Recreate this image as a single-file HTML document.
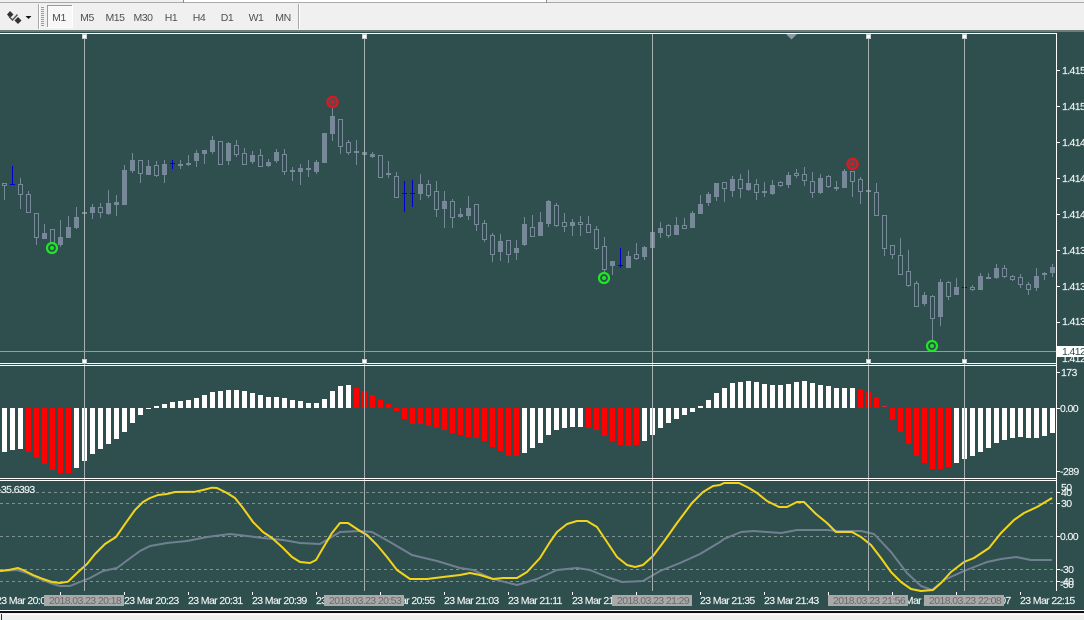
<!DOCTYPE html>
<html><head><meta charset="utf-8"><title>Chart</title>
<style>
html,body{margin:0;padding:0;width:1084px;height:620px;overflow:hidden;background:#2f4f4f}
svg{display:block;position:absolute;left:0;top:0}
text{font-family:"Liberation Sans",sans-serif;font-size:10.5px;letter-spacing:-.6px}
.ax text{fill:#eef2f2;stroke:#eef2f2;stroke-width:.15px}
.tb text{fill:#4f4f4f;font-size:10.5px;letter-spacing:-.45px;text-anchor:middle}
.lb text{fill:#6a6a6a}
</style></head><body>
<svg width="1084" height="620" viewBox="0 0 1084 620" xmlns="http://www.w3.org/2000/svg">
<rect width="1084" height="620" fill="#2f4f4f"/>

<!-- dashed levels -->
<path d="M0 492.5H1056M0 503.5H1056M0 536.5H1056M0 569.5H1056M0 581.5H1056" stroke="#7f9292" stroke-dasharray="3 3" fill="none"/>

<!-- wicks -->
<path fill="none" stroke="#778899" stroke-width="1" d="M4.5 183V200M20.5 178V209M28.5 191V213M36.5 213V245M44.5 224V239M52.5 229V250M60.5 220V247M68.5 216V238M76.5 207V229M92.5 204V219M100.5 203V218M108.5 190V215M116.5 195V216M124.5 165V205M132.5 153V173M140.5 160V183M148.5 160V175M156.5 161V177M164.5 160V183M180.5 160V169M188.5 155V166M196.5 150V167M204.5 150V164M212.5 136V154M220.5 141V165M228.5 142V165M236.5 140V157M244.5 148V165M252.5 151V164M260.5 149V167M268.5 159V167M276.5 149V163M284.5 149V175M292.5 167V181M300.5 164V185M308.5 160V177M316.5 160V174M324.5 133V163M332.5 108V141M340.5 119V154M348.5 140V155M356.5 140V165M364.5 152V156M372.5 152V158M380.5 155V178M388.5 161V178M396.5 172V198M420.5 174V200M428.5 180V198M436.5 181V217M444.5 191V228M452.5 199V228M460.5 208V218M468.5 196V220M476.5 204V231M484.5 220V242M492.5 233V262M500.5 234V261M508.5 240V263M516.5 240V260M524.5 217V246M532.5 215V236M540.5 212V236M548.5 200V227M556.5 203V227M564.5 213V232M572.5 219V236M580.5 216V236M588.5 216V233M596.5 226V250M604.5 237V272M612.5 261V275M628.5 251V268M636.5 243V260M644.5 246V260M652.5 232V248M660.5 222V238M668.5 224V238M676.5 217V235M684.5 218V228M692.5 211V228M700.5 195V214M708.5 192V206M716.5 183V201M724.5 182V202M732.5 176V197M740.5 174V198M748.5 170V191M756.5 179V200M764.5 182V197M772.5 180V195M780.5 181V187M788.5 172V188M796.5 169V178M804.5 167V186M812.5 172V198M820.5 174V194M828.5 175V188M836.5 181V191M844.5 169V188M852.5 171V197M860.5 177V204M876.5 183V216M884.5 215V256M892.5 245V259M900.5 238V274M908.5 250V287M916.5 281V307M924.5 292V306M932.5 295V340M940.5 279V326M948.5 281V300M956.5 278V295M972.5 285V291M980.5 273V290M988.5 273V279M996.5 264V279M1004.5 265V278M1012.5 275V281M1020.5 274V288M1028.5 282V295M1036.5 268V291M1044.5 272V280M1052.5 264V277"/>
<!-- filled bodies -->
<path fill="none" stroke="#778899" stroke-width="5" d="M44.5 233V239M60.5 237V245M68.5 227V238M76.5 217V228M84.5 212V214M92.5 207V213M108.5 203V214M116.5 202V205M124.5 170V205M132.5 160V171M148.5 166V175M164.5 164V175M180.5 164V166M188.5 163V165M196.5 153V161M204.5 150V154M212.5 140V152M228.5 143V161M252.5 155V162M268.5 162V166M276.5 152V161M292.5 170V172M300.5 168V172M308.5 168V170M316.5 162V172M324.5 133V163M332.5 116V134M356.5 151V153M364.5 152V155M372.5 154V157M388.5 173V175M420.5 184V194M444.5 201V209M460.5 214V217M468.5 208V216M500.5 241V252M516.5 248V253M524.5 224V245M540.5 222V236M548.5 201V224M572.5 222V226M612.5 261V266M628.5 256V268M644.5 247V257M652.5 232V248M660.5 228V233M676.5 225V235M692.5 213V228M700.5 204V214M708.5 194V203M716.5 183V197M732.5 179V191M748.5 183V190M764.5 191V193M772.5 185V194M788.5 175V185M820.5 178V193M836.5 187V189M844.5 171V188M868.5 190V192M924.5 295V304M940.5 282V317M956.5 287V295M980.5 276V290M988.5 277V279M996.5 268V278M1036.5 276V288M1044.5 273V275M1052.5 267V273"/>
<!-- hollow bodies -->
<path fill="#2f4f4f" stroke="#778899" stroke-width="1" d="M2.5 183.5h4v2h-4zM18.5 184.5h4v10h-4zM26.5 194.5h4v18h-4zM34.5 213.5h4v24h-4zM50.5 229.5h4v14h-4zM98.5 207.5h4v5h-4zM138.5 160.5h4v13h-4zM154.5 165.5h4v10h-4zM218.5 141.5h4v23h-4zM234.5 145.5h4v9h-4zM242.5 153.5h4v11h-4zM258.5 155.5h4v11h-4zM282.5 154.5h4v17h-4zM338.5 119.5h4v27h-4zM346.5 142.5h4v10h-4zM378.5 155.5h4v22h-4zM394.5 176.5h4v21h-4zM426.5 184.5h4v11h-4zM434.5 191.5h4v18h-4zM450.5 201.5h4v16h-4zM474.5 204.5h4v20h-4zM482.5 223.5h4v16h-4zM490.5 235.5h4v19h-4zM506.5 240.5h4v14h-4zM530.5 227.5h4v9h-4zM554.5 205.5h4v20h-4zM562.5 222.5h4v4h-4zM578.5 222.5h4v2h-4zM586.5 224.5h4v8h-4zM594.5 229.5h4v19h-4zM602.5 246.5h4v23h-4zM634.5 254.5h4v4h-4zM666.5 225.5h4v10h-4zM682.5 225.5h4v3h-4zM722.5 182.5h4v6h-4zM738.5 179.5h4v9h-4zM754.5 184.5h4v8h-4zM778.5 182.5h4v3h-4zM794.5 173.5h4v2h-4zM802.5 174.5h4v6h-4zM810.5 181.5h4v11h-4zM826.5 176.5h4v10h-4zM850.5 171.5h4v10h-4zM858.5 179.5h4v12h-4zM874.5 192.5h4v23h-4zM882.5 215.5h4v33h-4zM890.5 245.5h4v9h-4zM898.5 255.5h4v19h-4zM906.5 271.5h4v14h-4zM914.5 283.5h4v23h-4zM930.5 296.5h4v22h-4zM946.5 282.5h4v14h-4zM970.5 287.5h4v2h-4zM1002.5 268.5h4v8h-4zM1010.5 276.5h4v3h-4zM1018.5 277.5h4v7h-4zM1026.5 284.5h4v5h-4z"/>
<!-- blue candles -->
<path fill="none" stroke="#0000cd" stroke-width="1" d="M12.5 166V185M10 184.5H15M172.5 160V169M170 163.5H175M404.5 181V212M402 193.5H407M412.5 180V207M410 193.5H415M620.5 248V268M618 265.5H623M962 287.5H967"/>

<!-- markers -->
<circle cx="52" cy="248" r="5" fill="#2f4f4f" stroke="#1de622" stroke-width="2.2"/><circle cx="52" cy="248" r="2" fill="#1de622"/>
<circle cx="604" cy="278" r="5" fill="#2f4f4f" stroke="#1de622" stroke-width="2.2"/><circle cx="604" cy="278" r="2" fill="#1de622"/>
<circle cx="932" cy="346" r="5" fill="#2f4f4f" stroke="#1de622" stroke-width="2.2"/><circle cx="932" cy="346" r="2" fill="#1de622"/>
<circle cx="332.500" cy="102" r="5.200" fill="#5a4a50" stroke="#e8141c" stroke-width="2"/><circle cx="332.500" cy="102" r="1.800" fill="#e8141c"/>
<circle cx="852.500" cy="164" r="5.200" fill="#5a4a50" stroke="#e8141c" stroke-width="2"/><circle cx="852.500" cy="164" r="1.800" fill="#e8141c"/>

<!-- histogram white -->
<path fill="none" stroke="#fff" stroke-width="5" d="M4.5 408V452M12.5 408V450M20.5 408V449M76.5 408V468M84.5 408V461M92.5 408V454M100.5 408V449M108.5 408V444M116.5 408V439M124.5 408V432M132.5 408V423M140.5 408V415M156.5 406V408M164.5 404V408M172.5 402V408M180.5 401V408M188.5 400V408M196.5 398V408M204.5 395V408M212.5 392V408M220.5 391V408M228.5 390V408M236.5 390V408M244.5 391V408M252.5 393V408M260.5 395V408M268.5 397V408M276.5 397V408M284.5 398V408M292.5 400V408M300.5 401V408M308.5 403V408M316.5 403V408M324.5 399V408M332.5 391V408M340.5 386V408M348.5 385V408M524.5 408V453M532.5 408V448M540.5 408V443M548.5 408V435M556.5 408V430M564.5 408V428M572.5 408V427M580.5 408V427M644.5 408V441M652.5 408V435M660.5 408V428M668.5 408V423M676.5 408V419M684.5 408V415M692.5 408V412M700.5 406V408M708.5 400V408M716.5 393V408M724.5 388V408M732.5 383V408M740.5 382V408M748.5 381V408M756.5 382V408M764.5 384V408M772.5 385V408M780.5 385V408M788.5 384V408M796.5 382V408M804.5 381V408M812.5 383V408M820.5 385V408M828.5 386V408M836.5 388V408M844.5 388V408M852.5 388V408M956.5 408V463M964.5 408V459M972.5 408V456M980.5 408V452M988.5 408V448M996.5 408V443M1004.5 408V440M1012.5 408V438M1020.5 408V437M1028.5 408V438M1036.5 408V438M1044.5 408V436M1052.5 408V433"/>
<path d="M146 408.5H151" stroke="#fff" stroke-width="1"/>
<!-- histogram red -->
<path fill="none" stroke="#f00" stroke-width="5" d="M28.5 408V452M36.5 408V458M44.5 408V464M52.5 408V470M60.5 408V473M68.5 408V473M356.5 388V408M364.5 391V408M372.5 395V408M380.5 400V408M388.5 404V408M396.5 408V411M404.5 408V419M412.5 408V424M420.5 408V424M428.5 408V426M436.5 408V428M444.5 408V430M452.5 408V433M460.5 408V435M468.5 408V437M476.5 408V438M484.5 408V441M492.5 408V447M500.5 408V451M508.5 408V456M516.5 408V456M588.5 408V428M596.5 408V430M604.5 408V436M612.5 408V441M620.5 408V445M628.5 408V446M636.5 408V445M860.5 389V408M868.5 392V408M876.5 397V408M892.5 408V420M900.5 408V432M908.5 408V444M916.5 408V456M924.5 408V463M932.5 408V469M940.5 408V469M948.5 408V467"/>
<path d="M882 406.5H887" stroke="#c03030" stroke-width="1"/>

<!-- lines -->
<polyline fill="none" stroke="#708090" stroke-width="2" stroke-linejoin="round" points="0,571 17,570 27,573 37,578 50,583 60,586 70,586 80,582 90,578 103,571 117,568 125,562 140,551 150,546 167,543 187,541 207,537 230,534 247,536 263,538 283,540 300,543 320,544 330,538 340,532 360,531 372,532 390,542 412,555 437,561 460,568 473,570 493,579 517,585 537,579 557,570 577,568 590,570 607,577 622,582 643,581 660,571 680,563 700,554 720,542 724,539 741,532 754,531 767,532 781,533 797,530 827,530 837,531 861,531 874,534 891,552 907,573 921,586 932,590 944,580 964,571 987,562 1001,559 1016,557 1031,560 1052,560"/>
<polyline fill="none" stroke="#f2d41a" stroke-width="2" stroke-linejoin="round" points="0,571 10,569.7 18,568 23,570 33,575 43,579 52,582 60,583 68,581.7 77,573 87,564 95,554 105,544 116,537 125,524 135,510 143,502 150,498 158,495 167,494 175,492 195,491.7 203,490 212,487.7 217,488 227,493 235,498 243,508 253,522 263,532 272,538 282,547 292,557 300,562 310,563 316,560 323,548 332,533 340,523 348,523 360,531 367,535 377,545 387,557 397,570 410,579 427,579 443,577 460,575 470,573 480,575 493,579 503,578 517,578 527,572 540,558 550,542 557,532 567,524 577,521 587,521 597,527 607,542 617,557 627,565 635,567 643,565 653,556 665,540 677,523 692,503 703,492 713,486 720,485 724,483 739,483 749,488 757,493 767,501 779,507 787,507 797,502 804,502 816,514 827,523 836,532 852,532 861,537 871,545 881,558 891,572 901,582 911,589 921,591 933,590 941,583 951,572 964,562 974,558 989,548 1001,533 1014,520 1024,513 1037,507 1052,498"/>

<!-- crosshair / selection lines -->
<path d="M84.5 33V591M364.5 33V591M652.5 33V591M868.5 33V591M964.5 33V591" stroke="#a6b0b0" stroke-width="1" fill="none"/>
<path d="M0 351.5H1057" stroke="#8ca0a0" stroke-width="1"/>

<!-- panel frames -->
<path d="M0 33.5H1056.5V591M0 363.5H1056M0 365.5H1056M0 478.5H1056M0 480.5H1056" stroke="#fff" stroke-width="1" fill="none"/>
<path d="M786 34H797L791.500 39.500z" fill="#8c9aa6"/>

<!-- anchors -->
<g fill="#fff" stroke="#c4cccc" stroke-width="1">
<rect x="82.500" y="34.500" width="4" height="4"/><rect x="362.500" y="34.500" width="4" height="4"/><rect x="866.500" y="34.500" width="4" height="4"/><rect x="962.500" y="34.500" width="4" height="4"/>
<rect x="82.500" y="359.500" width="4" height="4"/><rect x="362.500" y="359.500" width="4" height="4"/><rect x="866.500" y="359.500" width="4" height="4"/><rect x="962.500" y="359.500" width="4" height="4"/>
</g>

<!-- right axis ticks -->
<path d="M1057 70.500h3M1057 106.500h3M1057 142.500h3M1057 178.500h3M1057 214.500h3M1057 250.500h3M1057 286.500h3M1057 322.500h3M1057 372.500h3M1057 408.500h3M1057 471.500h3M1057 492.500h3M1057 503.500h3M1057 536.500h3M1057 569.500h3M1057 581.500h3" stroke="#fff"/>
<g class="ax">
<text x="1062" y="74">1.415</text><text x="1062" y="110">1.415</text><text x="1062" y="146">1.414</text><text x="1062" y="182">1.414</text><text x="1062" y="218">1.414</text><text x="1062" y="254">1.413</text><text x="1062" y="290">1.413</text><text x="1062" y="325">1.413</text><text x="1062" y="362">1.412</text>
<text x="1061" y="376">173</text><text x="1060" y="412">0.00</text><text x="1060" y="475">-289</text>
<text x="-2" y="493">-35.6393</text>
<text x="1061" y="491">50</text><text x="1061" y="496">40</text><text x="1061" y="507">30</text><text x="1060" y="540">0.00</text><text x="1060" y="573">-30</text><text x="1060" y="585">-40</text><text x="1060" y="588">-50</text>
</g>
<rect x="1057" y="346" width="27" height="11" fill="#fff"/>
<text x="1062" y="355" fill="#2f4f4f">1.412</text>

<!-- time axis -->
<path d="M60.500 592v3M124.500 592v3M188.500 592v3M252.500 592v3M316.500 592v3M380.500 592v3M444.500 592v3M508.500 592v3M572.500 592v3M636.500 592v3M700.500 592v3M764.500 592v3M828.500 592v3M892.500 592v3M956.500 592v3M1020.500 592v3" stroke="#fff"/>
<g class="ax">
<text x="-4" y="604">23 Mar 20:07</text><text x="60" y="604">23 Mar 20:15</text><text x="124" y="604">23 Mar 20:23</text><text x="188" y="604">23 Mar 20:31</text><text x="252" y="604">23 Mar 20:39</text><text x="316" y="604">23 Mar 20:47</text><text x="380" y="604">23 Mar 20:55</text><text x="444" y="604">23 Mar 21:03</text><text x="508" y="604">23 Mar 21:11</text><text x="572" y="604">23 Mar 21:19</text><text x="636" y="604">23 Mar 21:27</text><text x="700" y="604">23 Mar 21:35</text><text x="764" y="604">23 Mar 21:43</text><text x="828" y="604">23 Mar 21:51</text><text x="892" y="604">23 Mar 21:59</text><text x="956" y="604">23 Mar 22:07</text><text x="1020" y="604">23 Mar 22:15</text>
</g>
<g fill="#a9a9a9">
<rect x="44" y="595" width="80" height="11"/><rect x="324" y="595" width="80" height="11"/><rect x="612" y="595" width="80" height="11"/><rect x="828" y="595" width="80" height="11"/><rect x="924" y="595" width="80" height="11"/>
</g>
<g class="lb">
<text x="49" y="604">2018.03.23 20:18</text><text x="329" y="604">2018.03.23 20:53</text><text x="617" y="604">2018.03.23 21:29</text><text x="833" y="604">2018.03.23 21:56</text><text x="929" y="604">2018.03.23 22:08</text>
</g>

<!-- bottom edge -->
<rect x="0" y="610" width="1084" height="1" fill="#fff"/>
<rect x="0" y="611" width="1084" height="2" fill="#111"/>
<rect x="0" y="613" width="1084" height="7" fill="#f0f0f0"/>
<rect x="2" y="614" width="1082" height="1" fill="#fff"/>
<rect x="1" y="614" width="1" height="6" fill="#333"/>

<!-- toolbar -->
<rect x="0" y="0" width="1084" height="30" fill="#f0f0f0"/>
<rect x="0" y="30" width="1084" height="2" fill="#6f7a7a"/>
<rect x="0" y="32" width="1084" height="1" fill="#2f4f4f"/>
<rect x="0" y="2" width="1084" height="1" fill="#a9a9a9"/>
<rect x="184" y="0" width="362" height="2" fill="#fff"/>
<path d="M183.500 0V3M546.500 0V3" stroke="#8a8a8a"/>
<path d="M38.500 4V29M298.500 4V29" stroke="#a8a8a8"/>
<path d="M39.500 4V29M299.500 4V29" stroke="#fff"/>
<path d="M41 7.500h3M41 9.500h3M41 11.500h3M41 13.500h3M41 15.500h3M41 17.500h3M41 19.500h3M41 21.500h3M41 23.500h3M41 25.500h3" stroke="#9a9a9a"/>
<rect x="47" y="5" width="25" height="22" fill="#f8f8f8"/>
<path d="M47.500 27V5.500H72" stroke="#9a9a9a" fill="none"/>
<path d="M72.500 5V27.500H47" stroke="#fff" fill="none"/>
<!-- period icon -->
<path d="M10 11l3.500 3.500L10 18l-3-3.500z" fill="#333"/>
<path d="M18 17l3.500 3.500L18 24l-3.500-3.500z" fill="#333"/>
<path d="M9 16.500l3.500 3.500 5-5.500" fill="none" stroke="#555" stroke-width="1.500"/>
<path d="M25.500 16h6l-3 3z" fill="#111"/>
<g class="tb">
<text x="59" y="21">M1</text><text x="87" y="21">M5</text><text x="115" y="21">M15</text><text x="143" y="21">M30</text><text x="171" y="21">H1</text><text x="199" y="21">H4</text><text x="227" y="21">D1</text><text x="256" y="21">W1</text><text x="283" y="21">MN</text>
</g>
</svg>
</body></html>
